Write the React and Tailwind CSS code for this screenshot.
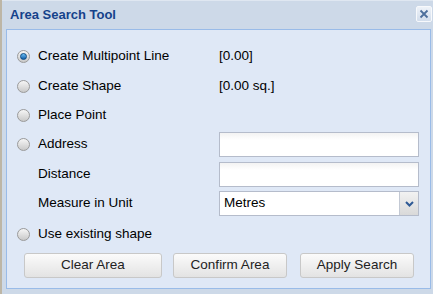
import React from 'react';

function Radio({ checked }) {
  return (
    <span className="relative inline-block w-[13px] h-[13px] rounded-full border border-[#9a9a9a] bg-gradient-to-b from-[#f6f6f6] to-[#c9c9c9] shrink-0">
      {checked && (
        <span className="absolute left-[2px] top-[2px] w-[7px] h-[7px] rounded-full bg-gradient-to-b from-[#6cc0f5] to-[#0f5fa8] border border-[#0b4b85]" />
      )}
    </span>
  );
}

function Input() {
  return (
    <div className="w-[200px] h-[25px] border border-[#b5bccb] bg-gradient-to-b from-[#f3f3f3] to-white to-[30%]" />
  );
}

function Button({ children, w }) {
  return (
    <button className={`${w} h-[25px] rounded-[3px] border border-[#c8c8c8] bg-gradient-to-b from-[#fbfbfb] to-[#e3e3e3] text-[13.5px] text-[#222]`}>
      {children}
    </button>
  );
}

export default function App() {
  return (
    <div
      className="w-[433px] h-[294px] bg-[#cdd9e8] border-l-2 border-[#bdb6a6] flex flex-col text-black"
      style={{ fontFamily: '"Liberation Sans", Arial, sans-serif' }}
    >
      <div className="h-[29px] flex items-center justify-between pl-[8px] pr-[1px] border-t border-[#dfe7f1]">
        <span className="text-[13px] font-bold text-[#15428b]">Area Search Tool</span>
        <span className="w-[16px] h-[16px] mb-[2px] border border-[#f7f9fc] rounded-[2px] bg-gradient-to-b from-[#eef3f9] to-[#d3deec] flex items-center justify-center">
          <svg width="10" height="10" viewBox="0 0 10 10">
            <path d="M1.5 1.5 L8.5 8.5 M8.5 1.5 L1.5 8.5" stroke="#4d6f9c" strokeWidth="1.8" />
          </svg>
        </span>
      </div>
      <div className="ml-[4px] mr-[2px] h-[260px] border border-[#99bbe8] bg-[#dfe8f6] pt-[11px] text-[13.5px]">
        <div className="flex items-center h-[30px] pl-[10px]">
          <Radio checked />
          <span className="ml-[8px] w-[181px]">Create Multipoint Line</span>
          <span>[0.00]</span>
        </div>
        <div className="flex items-center h-[30px] pl-[10px]">
          <Radio />
          <span className="ml-[8px] w-[181px]">Create Shape</span>
          <span>[0.00 sq.]</span>
        </div>
        <div className="flex items-center h-[29px] pl-[10px]">
          <Radio />
          <span className="ml-[8px]">Place Point</span>
        </div>
        <div className="flex items-center h-[29px] pl-[10px]">
          <Radio />
          <span className="ml-[8px] w-[181px]">Address</span>
          <Input />
        </div>
        <div className="flex items-center h-[30px] pl-[31px]">
          <span className="w-[181px]">Distance</span>
          <Input />
        </div>
        <div className="flex items-center h-[29px] pl-[31px]">
          <span className="w-[181px]">Measure in Unit</span>
          <div className="w-[200px] h-[25px] border border-[#b5bccb] bg-white flex">
            <span className="flex-1 pl-[4px] flex items-center">Metres</span>
            <span className="w-[19px] border-l border-[#c3c9d4] bg-gradient-to-b from-[#f2f2f2] to-[#d9d9d9] flex items-center justify-center">
              <svg width="9" height="6" viewBox="0 0 9 6">
                <path d="M1 1 L4.5 4.5 L8 1" stroke="#2f5a95" strokeWidth="2" fill="none" />
              </svg>
            </span>
          </div>
        </div>
        <div className="flex items-center h-[32px] pl-[10px]">
          <Radio />
          <span className="ml-[8px]">Use existing shape</span>
        </div>
        <div className="flex items-center pl-[17px] mt-[3px]">
          <Button w="w-[138px]">Clear Area</Button>
          <span className="w-[11px]" />
          <Button w="w-[114px]">Confirm Area</Button>
          <span className="w-[13px]" />
          <Button w="w-[114px]">Apply Search</Button>
        </div>
      </div>
    </div>
  );
}
